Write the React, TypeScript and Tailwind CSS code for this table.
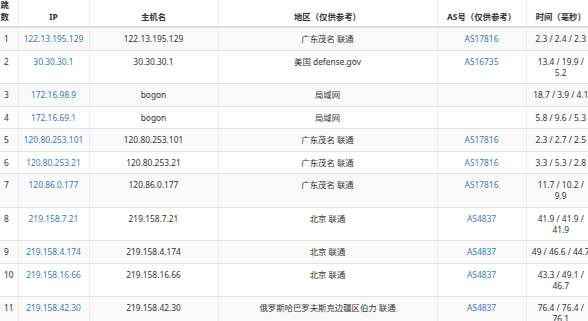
import React from "react";

type Row = {
  hop: string;
  ip: string;
  host: string;
  region: string;
  as: string;
  time: string;
};

const rows: Row[] = [
  { hop: "1", ip: "122.13.195.129", host: "122.13.195.129", region: "广东茂名 联通", as: "AS17816", time: "2.3 / 2.4 / 2.3" },
  { hop: "2", ip: "30.30.30.1", host: "30.30.30.1", region: "美国 defense.gov", as: "AS16735", time: "13.4 / 19.9 / 5.2" },
  { hop: "3", ip: "172.16.98.9", host: "bogon", region: "局域网", as: "", time: "18.7 / 3.9 / 4.1" },
  { hop: "4", ip: "172.16.69.1", host: "bogon", region: "局域网", as: "", time: "5.8 / 9.6 / 5.3" },
  { hop: "5", ip: "120.80.253.101", host: "120.80.253.101", region: "广东茂名 联通", as: "AS17816", time: "2.3 / 2.7 / 2.5" },
  { hop: "6", ip: "120.80.253.21", host: "120.80.253.21", region: "广东茂名 联通", as: "AS17816", time: "3.3 / 5.3 / 2.8" },
  { hop: "7", ip: "120.86.0.177", host: "120.86.0.177", region: "广东茂名 联通", as: "AS17816", time: "11.7 / 10.2 / 9.9" },
  { hop: "8", ip: "219.158.7.21", host: "219.158.7.21", region: "北京 联通", as: "AS4837", time: "41.9 / 41.9 / 41.9" },
  { hop: "9", ip: "219.158.4.174", host: "219.158.4.174", region: "北京 联通", as: "AS4837", time: "49 / 46.6 / 44.7" },
  { hop: "10", ip: "219.158.16.66", host: "219.158.16.66", region: "北京 联通", as: "AS4837", time: "43.3 / 49.1 / 46.7" },
  { hop: "11", ip: "219.158.42.30", host: "219.158.42.30", region: "俄罗斯哈巴罗夫斯克边疆区伯力 联通", as: "AS4837", time: "76.4 / 76.4 / 76.1" },
];

const th =
  "align-bottom font-bold text-center pt-0 pb-[3px] px-[5px] leading-[12px] border-b-2 border-b-[#dddddd] border-l border-l-[#ececec]";
const td =
  "align-top text-center pt-[5.25px] pb-[5.25px] px-[5px] border-b border-b-[#e2e2e2] border-l border-l-[#ececec]";

export default function App() {
  return (
    <div className="w-[588px] h-[321px] overflow-hidden bg-white font-['Noto_Sans','Noto_Sans_CJK_SC',sans-serif] text-[#333333]">
      <table className="table-fixed border-collapse w-[595px] -mt-px text-[8.4px] leading-[11px]">
        <colgroup>
          <col className="w-[18px]" />
          <col className="w-[71px]" />
          <col className="w-[129px]" />
          <col className="w-[219px]" />
          <col className="w-[89px]" />
          <col className="w-[69px]" />
        </colgroup>
        <thead>
          <tr className="bg-white">
            <th className="align-bottom font-bold text-left pt-0 pb-[3px] pl-[0.5px] pr-[5px] leading-[12px] border-b-2 border-b-[#dddddd]">
              跳数
            </th>
            <th className={th}>IP</th>
            <th className={th}>主机名</th>
            <th className={th}>地区（仅供参考）</th>
            <th className={th}>AS号（仅供参考）</th>
            <th className={th}>时间（毫秒）</th>
          </tr>
        </thead>
        <tbody>
          {rows.map((r, i) => (
            <tr key={r.hop} className={i % 2 === 0 ? "bg-[#f9f9f9]" : "bg-white"}>
              <td className="align-top text-left pt-[5.25px] pb-[5.25px] pl-[4px] pr-[2px] border-b border-b-[#e2e2e2] whitespace-nowrap">
                {r.hop}
              </td>
              <td className={td}>
                <span className="text-[#3a7ab5]">{r.ip}</span>
              </td>
              <td className={td}>{r.host}</td>
              <td className={td}>{r.region}</td>
              <td className={td}>
                <span className="text-[#3a7ab5]">{r.as}</span>
              </td>
              <td className={td}>{r.time}</td>
            </tr>
          ))}
        </tbody>
      </table>
    </div>
  );
}
